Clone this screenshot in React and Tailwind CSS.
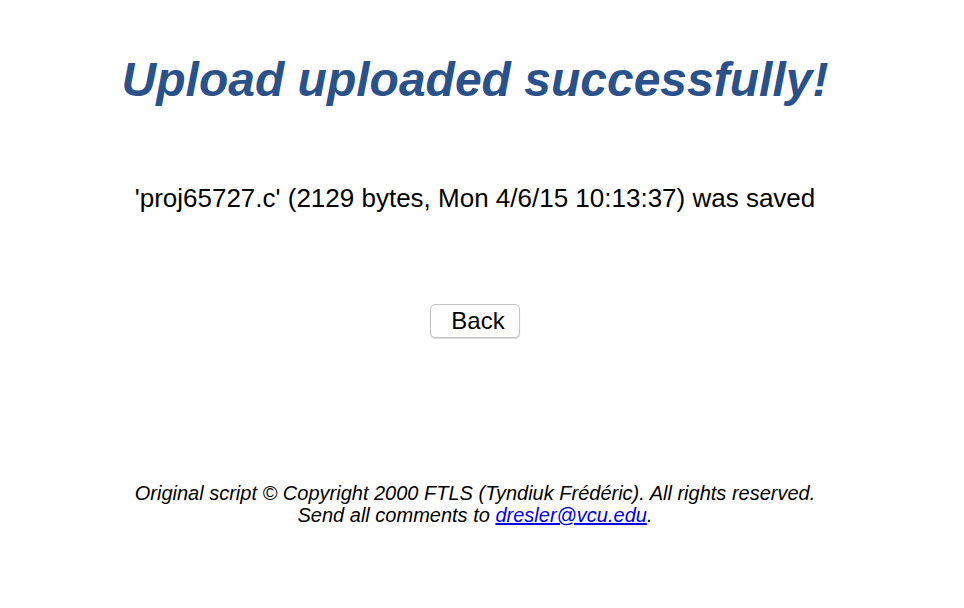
export default function App() {
  return (
    <div className="min-h-[608px] w-[950px] bg-white text-center text-black font-['Liberation_Sans',Arial,sans-serif]">
      <div className="pt-[52px]">
        <h1 className="text-[48px] leading-[56px] font-bold italic text-[#2a5189]">
          Upload uploaded successfully!
        </h1>
      </div>
      <p className="mt-[75px] text-[26px] leading-[30px]">
        'proj65727.c' (2129 bytes, Mon 4/6/15 10:13:37) was saved
      </p>
      <div className="mt-[91px] flex justify-center">
        <button className="w-[90px] h-[34px] rounded-[5px] border border-[#c4c4c4] bg-white text-[24px] leading-none pl-[6px] shadow-[0_1px_1px_rgba(0,0,0,0.15)]">
          Back
        </button>
      </div>
      <div className="mt-[144px] text-[20px] leading-[22px] italic">
        <div>Original script © Copyright 2000 FTLS (Tyndiuk Frédéric). All rights reserved.</div>
        <div>
          Send all comments to{" "}
          <a href="mailto:dresler@vcu.edu" className="text-[#0000ee] underline">dresler@vcu.edu</a>.
        </div>
      </div>
    </div>
  );
}
